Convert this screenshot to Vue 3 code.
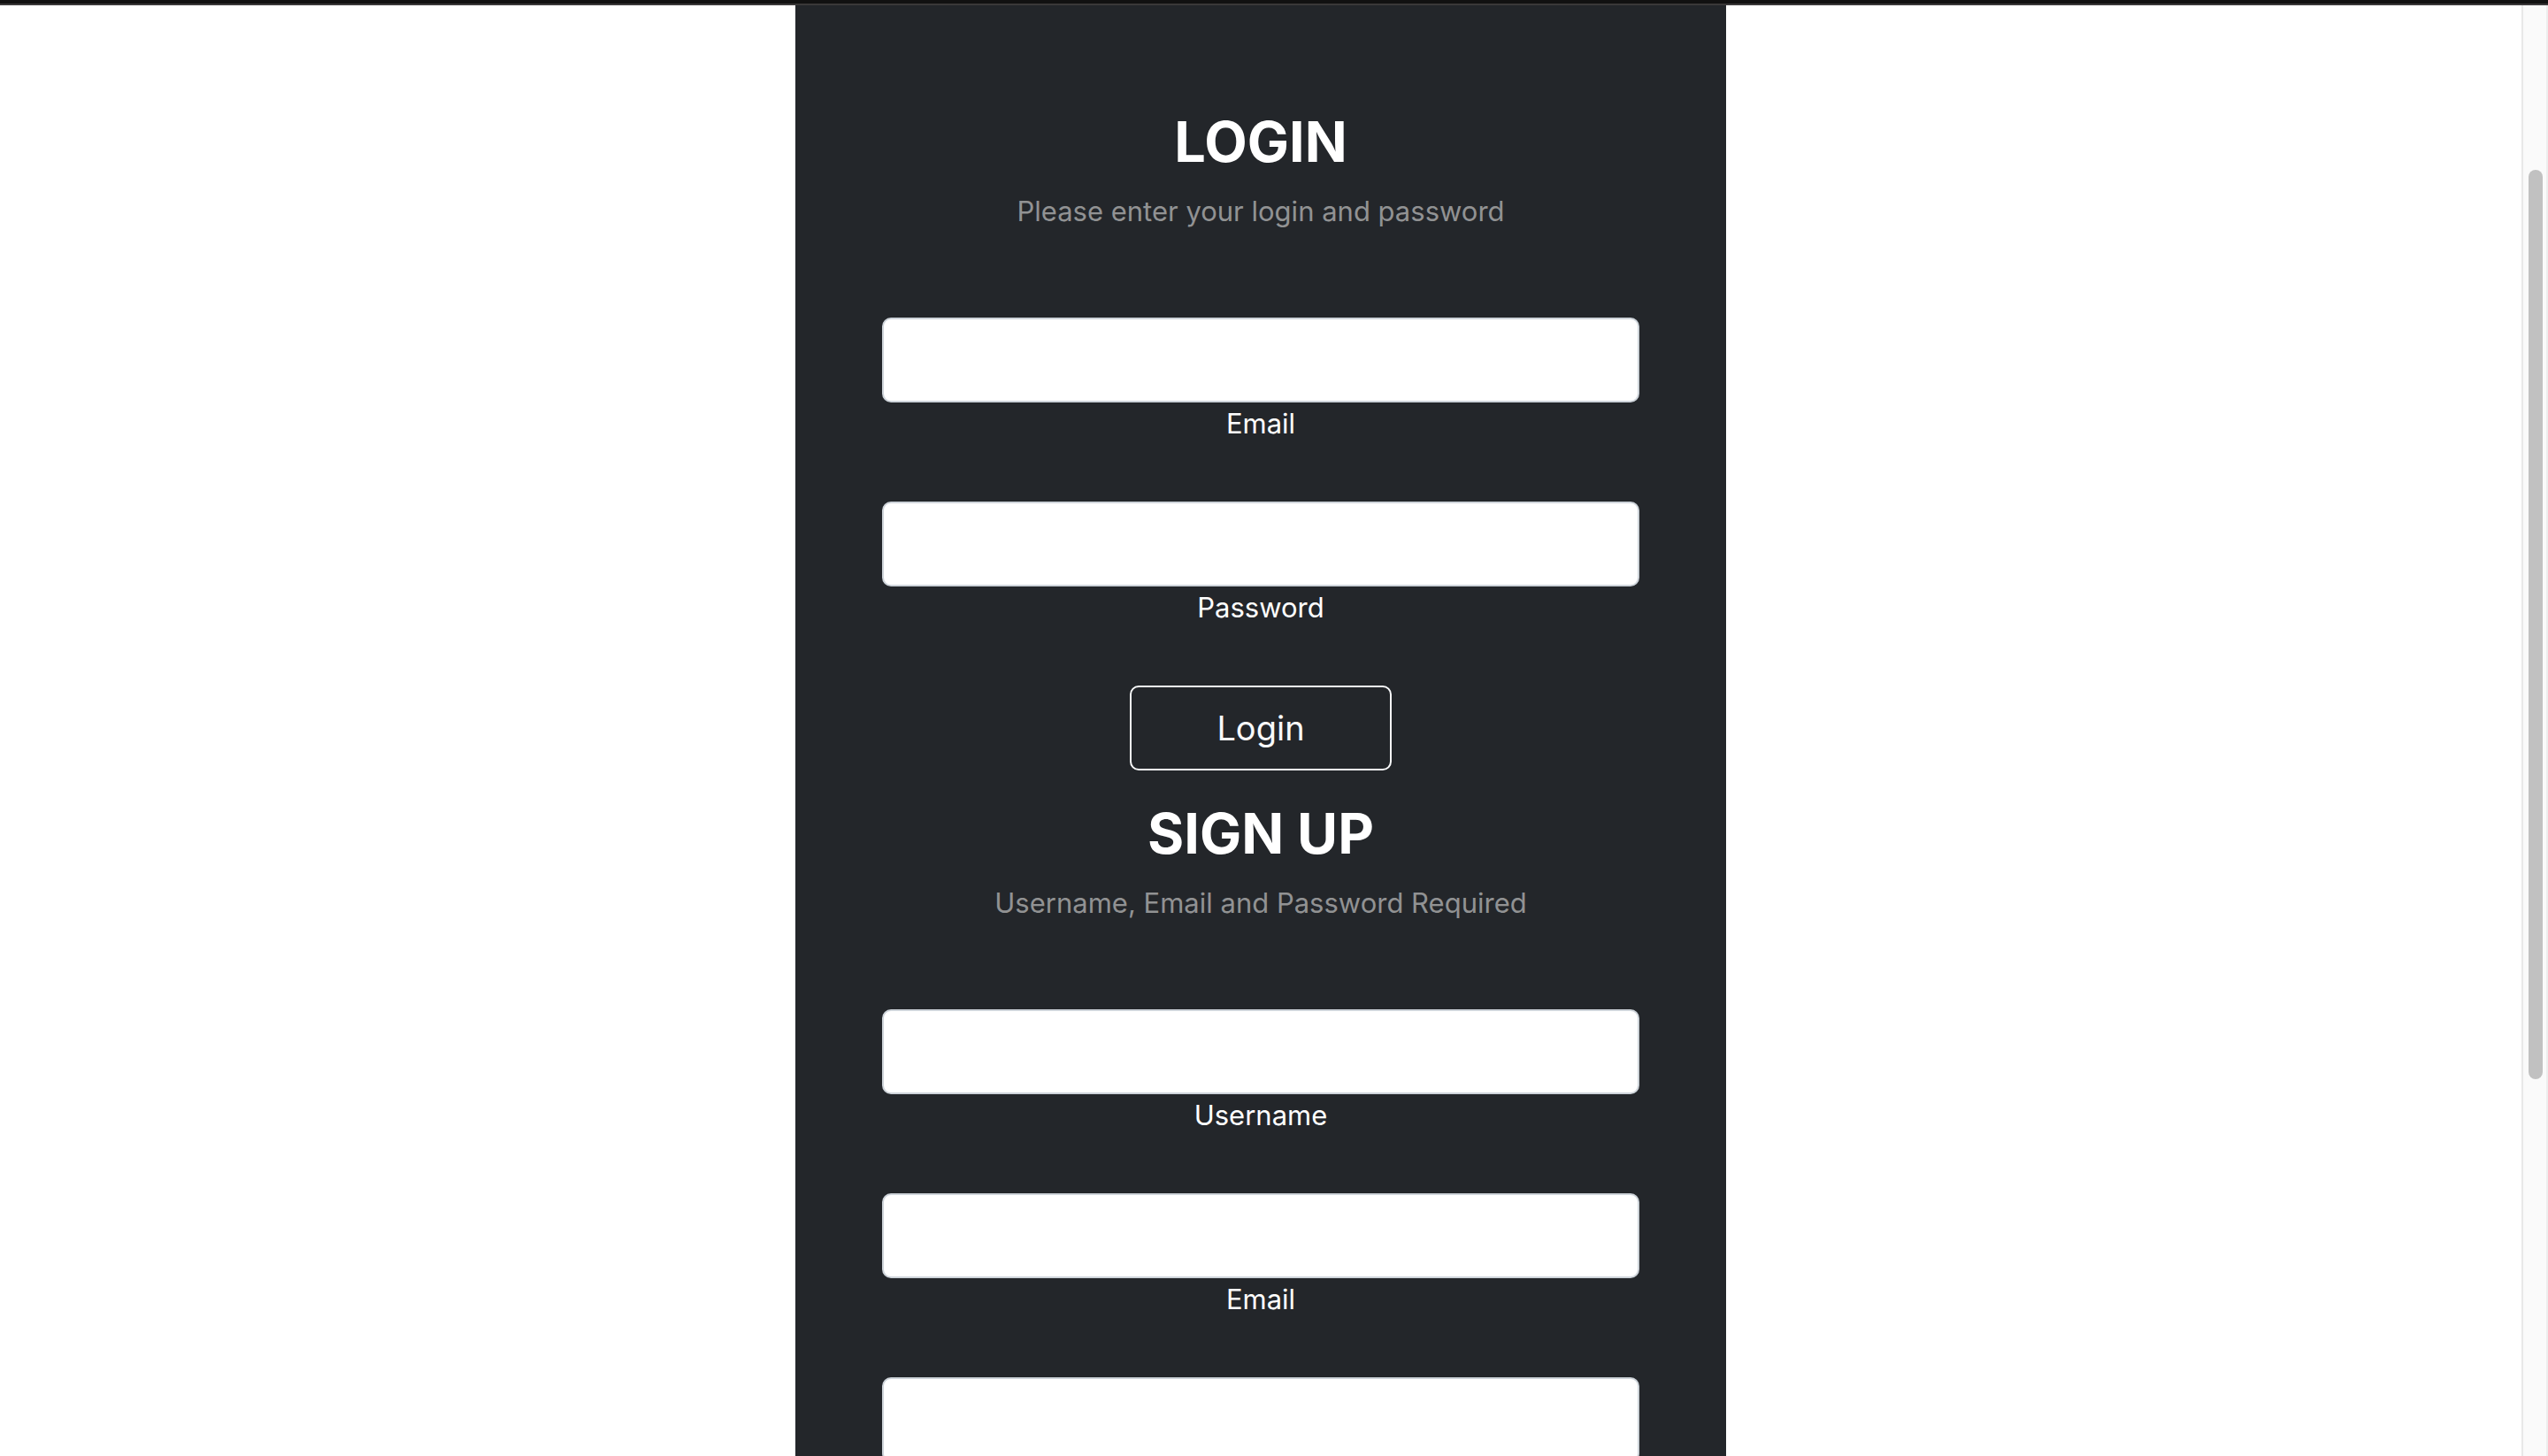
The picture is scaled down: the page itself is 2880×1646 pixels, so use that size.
<script setup>
const loginFields = [
  { id: 'login-email', label: 'Email', type: 'email' },
  { id: 'login-password', label: 'Password', type: 'password' },
]
const signupFields = [
  { id: 'signup-username', label: 'Username', type: 'text' },
  { id: 'signup-email', label: 'Email', type: 'email' },
  { id: 'signup-password', label: 'Password', type: 'password' },
]
</script>

<template>
  <div class="page">
    <div class="topbar"></div>
    <div class="viewport">
      <main class="content">
        <section class="card">
          <form class="form" @submit.prevent>
            <h2>LOGIN</h2>
            <p class="hint">Please enter your login and password</p>
            <div v-for="field in loginFields" :key="field.id" class="field">
              <input :id="field.id" :type="field.type" />
              <label :for="field.id">{{ field.label }}</label>
            </div>
            <button type="submit">Login</button>
          </form>
          <form class="form" @submit.prevent>
            <h2>SIGN UP</h2>
            <p class="hint">Username, Email and Password Required</p>
            <div v-for="field in signupFields" :key="field.id" class="field">
              <input :id="field.id" :type="field.type" />
              <label :for="field.id">{{ field.label }}</label>
            </div>
          </form>
        </section>
      </main>
      <div class="track"><div class="thumb"></div></div>
    </div>
  </div>
</template>

<style>
body {
  background: #fff;
}
</style>

<style scoped>
.page {
  display: flex;
  flex-direction: column;
  height: 100vh;
  overflow: hidden;
  font-family: Inter, "Liberation Sans", sans-serif;
}
.topbar {
  flex: none;
  height: 4px;
  border-bottom: 2px solid #3a3839;
  background: #111;
}
.viewport {
  flex: 1;
  min-height: 0;
  display: flex;
}
.content {
  flex: 1;
  display: flex;
  justify-content: center;
  align-items: flex-start;
}
.card {
  box-sizing: border-box;
  width: 100%;
  max-width: 1052px;
  padding: 115px 98px;
  display: flex;
  flex-direction: column;
  gap: 32px;
  background: #23262a;
  color: #fff;
}
.form {
  display: flex;
  flex-direction: column;
  align-items: center;
}
h2 {
  margin: 0 0 16px;
  font-size: 63px;
  line-height: 78px;
  font-weight: 700;
}
.hint {
  margin: 0 0 96px;
  font-size: 31px;
  line-height: 48px;
  color: #919293;
}
.field {
  width: 100%;
  display: flex;
  flex-direction: column;
  align-items: center;
  margin-bottom: 48px;
}
input {
  box-sizing: border-box;
  width: 100%;
  height: 96px;
  padding: 16px 32px;
  border: 2px solid #ced4da;
  border-radius: 10px;
  background: #fff;
  font: inherit;
  font-size: 38px;
}
label {
  margin-bottom: 16px;
  font-size: 31px;
  line-height: 48px;
}
button {
  height: 96px;
  padding: 0 96px;
  border: 2px solid #f8f9fa;
  border-radius: 10px;
  background: transparent;
  color: #f8f9fa;
  font-family: inherit;
  font-size: 38px;
  line-height: 60px;
}
.track {
  box-sizing: border-box;
  width: 30px;
  padding: 186px 4px 0 6px;
  border-left: 2px solid #e8e8e8;
  border-right: 2px solid #ededed;
  background: #fafafa;
}
.thumb {
  height: calc(100% - 426px);
  border-radius: 8px;
  background: #c1c1c1;
}
</style>
